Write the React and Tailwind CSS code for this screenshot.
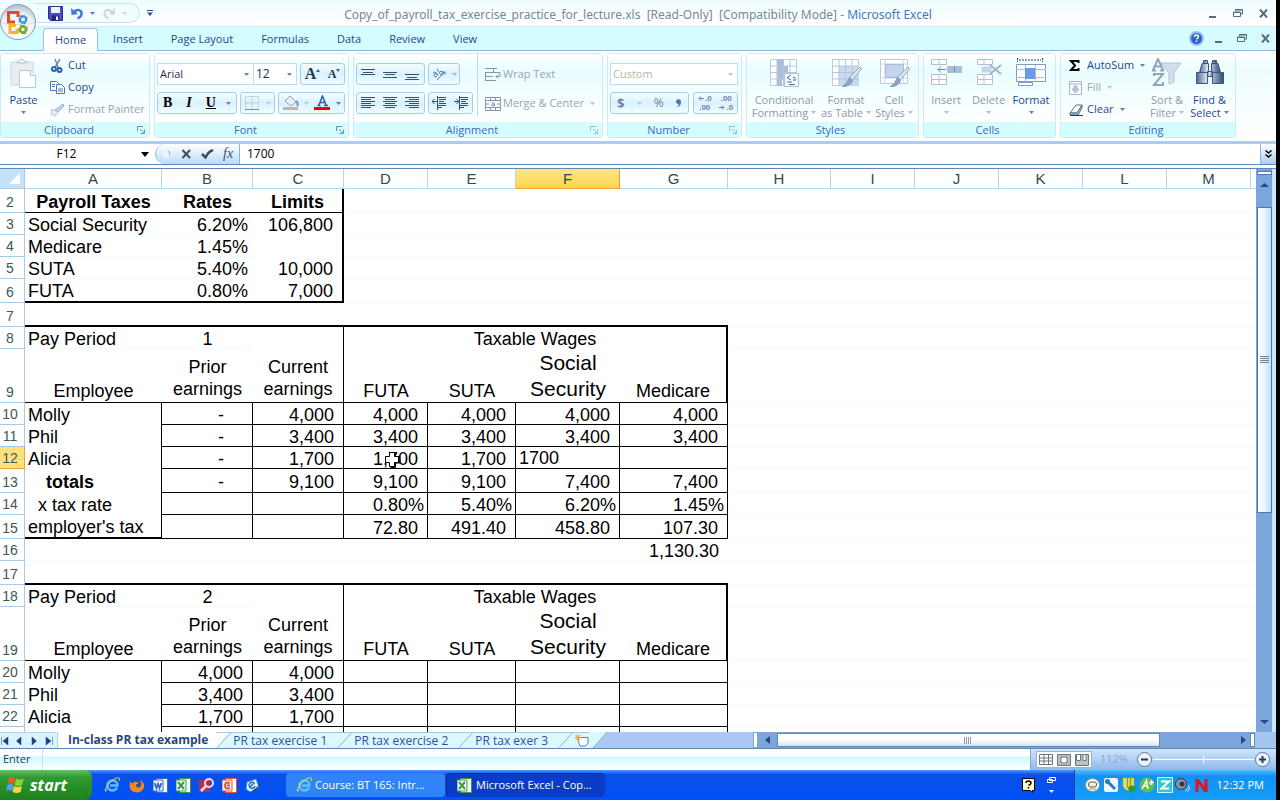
import { clsx } from "clsx";

const columns = [
    { key: "A", width: 137 },
    { key: "B", width: 91 },
    { key: "C", width: 91 },
    { key: "D", width: 84 },
    { key: "E", width: 88 },
    { key: "F", width: 104 },
    { key: "G", width: 108 },
    { key: "H", width: 103 },
    { key: "I", width: 84 },
    { key: "J", width: 84 },
    { key: "K", width: 84 },
    { key: "L", width: 84 },
    { key: "M", width: 84 },
];

// cell borders
const RB = "border-r border-r-black";
const RB2 = "border-r-2 border-r-black";
const BB = "border-b border-b-black";
const BB2 = "border-b-2 border-b-black";
const NONE = "";

// cell alignment
const left = "pl-[3px] text-left";
const center = "text-center";
const num = "pr-[9px] text-right";
const pct = "pr-[3px] text-right";
const rate = "pr-[5px] text-right";
const dash = "pr-[28px] text-right";

const money = (values, last = RB) =>
    values.map((t, i) => ({ t, a: t === "-" ? dash : num, b: [i === values.length - 1 ? last : RB, BB] }));

const periodRows = (first, period) => [
    {
        n: first,
        h: "h-[22px]",
        cells: [
            { t: "Pay Period", a: left },
            { t: period, a: center },
            { t: "", b: [RB] },
            { t: "Taxable Wages", a: center, span: 4, b: [RB2] },
        ],
    },
    {
        n: first + 1,
        h: "h-[54px]",
        tall: true,
        cells: [
            { t: "Employee", a: center, b: [BB] },
            { t: "Prior\nearnings", a: "text-center pb-[2px]", b: [BB] },
            { t: "Current\nearnings", a: "text-center pb-[2px]", b: [BB, RB] },
            { t: "FUTA", a: center, b: [BB] },
            { t: "SUTA", a: center, b: [BB] },
            { t: "Social\nSecurity", a: center, big: true, b: [BB] },
            { t: "Medicare", a: center, b: [BB, RB2] },
        ],
    },
];

const rows = [
    {
        n: 2,
        h: "h-[24px]",
        bold: true,
        cells: [
            { t: "Payroll Taxes", a: center, b: [BB] },
            { t: "Rates", a: center, b: [BB] },
            { t: "Limits", a: center, b: [BB, RB2] },
        ],
    },
    { n: 3, h: "h-[22px]", cells: [{ t: "Social Security", a: left }, { t: "6.20%", a: rate }, { t: "106,800", a: num, b: [RB2] }] },
    { n: 4, h: "h-[22px]", cells: [{ t: "Medicare", a: left }, { t: "1.45%", a: rate }, { t: "", b: [RB2] }] },
    { n: 5, h: "h-[22px]", cells: [{ t: "SUTA", a: left }, { t: "5.40%", a: rate }, { t: "10,000", a: num, b: [RB2] }] },
    {
        n: 6,
        h: "h-[24px]",
        cells: [
            { t: "FUTA", a: left, b: [BB2] },
            { t: "0.80%", a: rate, b: [BB2] },
            { t: "7,000", a: num, b: [BB2, RB2] },
        ],
    },
    { n: 7, h: "h-[24px]", cells: [{ t: "", span: 7, b: [BB2] }] },
    ...periodRows(8, "1"),
    { n: 10, h: "h-[22px]", cells: [{ t: "Molly", a: left, b: [RB] }, ...money(["-", "4,000", "4,000", "4,000", "4,000", "4,000"])] },
    { n: 11, h: "h-[22px]", cells: [{ t: "Phil", a: left, b: [RB] }, ...money(["-", "3,400", "3,400", "3,400", "3,400", "3,400"])] },
    {
        n: 12,
        h: "h-[22px]",
        active: true,
        cells: [
            { t: "Alicia", a: left, b: [RB] },
            ...money(["-", "1,700"]),
            { t: "1,700", a: num, b: [RB, BB], cursor: true },
            { t: "1,700", a: num, b: [RB, BB] },
            { t: "1700", a: left, b: [RB, BB], edit: true },
            { t: "", b: [RB, BB] },
        ],
    },
    {
        n: 13,
        h: "h-[24px]",
        cells: [
            { t: "totals", a: "pl-[21px] text-left font-bold", b: [RB] },
            ...money(["-", "9,100", "9,100", "9,100", "7,400", "7,400"]),
        ],
    },
    {
        n: 14,
        h: "h-[22px]",
        cells: [
            { t: "x tax rate", a: "pl-[13px] text-left", b: [RB] },
            { t: "", b: [RB, BB] },
            { t: "", b: [RB, BB] },
            ...["0.80%", "5.40%", "6.20%", "1.45%"].map(t => ({ t, a: pct, b: [RB, BB] })),
        ],
    },
    {
        n: 15,
        h: "h-[24px]",
        cells: [
            { t: "employer's tax", a: left, b: [RB, BB2] },
            ...money(["", "", "72.80", "491.40", "458.80", "107.30"]),
        ],
    },
    { n: 16, h: "h-[22px]", cells: [{ t: "", span: 6 }, { t: "1,130.30", a: num }] },
    { n: 17, h: "h-[24px]", cells: [{ t: "", span: 7, b: [BB2] }] },
    ...periodRows(18, "2"),
    { n: 20, h: "h-[22px]", cells: [{ t: "Molly", a: left, b: [RB] }, ...money(["4,000", "4,000", "", "", "", ""])] },
    { n: 21, h: "h-[22px]", cells: [{ t: "Phil", a: left, b: [RB] }, ...money(["3,400", "3,400", "", "", "", ""])] },
    { n: 22, h: "h-[22px]", cells: [{ t: "Alicia", a: left, b: [RB] }, ...money(["1,700", "1,700", "", "", "", ""])] },
    { n: "", h: "h-[24px]", cells: [{ t: "", b: [RB] }, ...money(["", "", "", "", "", ""])] },
];

function Arrow({ className = "text-[#5a83b8]" }) {
    return (
        <svg className={clsx("shrink-0", className)} width="5" height="3" viewBox="0 0 5 3" aria-hidden="true">
            <path d="M0 0h5L2.5 3z" fill="currentColor" />
        </svg>
    );
}

function OfficeButton() {
    return (
        <button type="button" aria-label="Office Button" className="absolute -left-px top-1 z-10">
            <svg width="38" height="38" viewBox="0 0 38 38">
                <defs>
                    <radialGradient id="orb" cx="50%" cy="75%" r="70%">
                        <stop offset="0" stopColor="#ffffff" />
                        <stop offset="0.7" stopColor="#eef4fa" />
                        <stop offset="1" stopColor="#b8c6d8" />
                    </radialGradient>
                </defs>
                <circle cx="19" cy="18" r="17.5" fill="url(#orb)" stroke="#8799b5" />
                <path d="M3 19c8 2 24 2 32 0" stroke="#d3dde9" fill="none" />
                <g fill="none" strokeWidth="3">
                    <path d="M16 18H9.500V8.500H19V13" stroke="#e8481c" />
                    <path d="M21 12.500h6v6h-6z" stroke="#3b8fdc" strokeWidth="2.500" strokeDasharray="5 1" />
                    <path d="M17 21.500h-6v7h7v-4" stroke="#f4b81c" />
                    <path d="M21 28.500v-6h6v6z" stroke="#6fae2c" strokeDasharray="5 1" />
                </g>
            </svg>
        </button>
    );
}

function WindowButtons({ className }) {
    return (
        <div className={clsx("flex items-center text-[#5a6b7c]", className)}>
            <button type="button" aria-label="Minimize">
                <svg width="9" height="9" viewBox="0 0 9 9"><path d="M1 8h7" stroke="currentColor" strokeWidth="2" /></svg>
            </button>
            <button type="button" aria-label="Restore">
                <svg width="10" height="9" viewBox="0 0 10 9" fill="none" stroke="currentColor">
                    <path d="M2.500 2V.5h7V5H8" />
                    <path d="M.5 3h7v4.500h-7z" />
                    <path d="M.5 3.500h7M2.500 1h7" />
                </svg>
            </button>
            <button type="button" aria-label="Close">
                <svg width="9" height="9" viewBox="0 0 9 9"><path d="M1 .5l7 8M8 .5l-7 8" stroke="currentColor" strokeWidth="2" /></svg>
            </button>
        </div>
    );
}

function TitleBar() {
    return (
        <header className="grid h-[26px] shrink-0 grid-cols-[1fr_auto_1fr] items-center bg-linear-to-b from-[#effdff] to-white">
            <div className="flex items-center gap-[7px] pl-9">
                <div className="flex h-5 items-center gap-1 rounded-r-full border border-l-0 border-[#c5e2f5] bg-[#f2fdff] pr-[12px] pl-[12px]">
                    <button type="button" aria-label="Save">
                        <svg width="15" height="15" viewBox="0 0 15 15">
                            <path d="M.5.500h14v14h-12l-2-2z" fill="#4a4fc0" stroke="#2b2f8a" />
                            <path d="M3 1h9v6H3z" fill="#eef3ff" />
                            <path d="M4 9.500h7V15H4z" fill="#23286e" />
                            <path d="M8 10.500h2V14H8z" fill="#fff" />
                        </svg>
                    </button>
                    <button type="button" aria-label="Undo" className="ml-[3px] flex items-center gap-[6px]">
                        <svg width="14" height="13" viewBox="0 0 14 13" fill="none">
                            <path d="M3 6c4-5 9-3 8.500 1 0 2-2 3.500-4 4.500" stroke="#3b78e0" strokeWidth="2.500" />
                            <path d="M1 1l.5 7L8 7z" fill="#3b78e0" />
                        </svg>
                        <Arrow />
                    </button>
                    <button type="button" aria-label="Redo" className="ml-[3px] flex items-center gap-[6px]">
                        <svg width="14" height="13" viewBox="0 0 14 13" fill="none">
                            <path d="M11 6C7 1 2 3 2.500 7c0 2 2 3.500 4 4.500" stroke="#c9d6e4" strokeWidth="2" />
                            <path d="M13 1l-.5 7L7 7z" fill="#c9d6e4" />
                        </svg>
                        <Arrow className="text-[#c3d3e3]" />
                    </button>
                </div>
                <button type="button" aria-label="Customize Quick Access Toolbar">
                    <svg width="6" height="6" viewBox="0 0 6 6" fill="#2c4f86"><path d="M0 0h6v1H0zM0 2.500h6L3 6z" /></svg>
                </button>
            </div>
            <h1 className="pt-[4px] font-['Noto_Sans',sans-serif] text-[12px] leading-4 whitespace-pre text-[#7a8796]">
                Copy_of_payroll_tax_exercise_practice_for_lecture.xls  [Read-Only]  [Compatibility Mode] -{" "}
                <span className="text-[#3f76c8]">Microsoft Excel</span>
            </h1>
            <WindowButtons className="justify-end gap-4 pr-[8px]" />
        </header>
    );
}

function RibbonTabs() {
    const tabs = ["Insert", "Page Layout", "Formulas", "Data", "Review", "View"];
    return (
        <nav className="flex h-[25px] shrink-0 items-end border-t border-b border-t-[#dcebf2] border-b-[#93b9e2] bg-[#d5fdff] pl-[43px] text-[11px] text-[#1c4790]">
            <button type="button" className="-mb-px mr-px h-[23px] rounded-t border border-b-0 border-[#9dc0e8] bg-white px-[11px] pt-px">
                Home
            </button>
            {tabs.map(tab => (
                <button key={tab} type="button" className="h-[22px] px-[14px] pt-px">
                    {tab}
                </button>
            ))}
            <div className="ml-auto flex items-center gap-[10px] self-center pr-[6px]">
                <button type="button" aria-label="Help">
                    <svg width="15" height="15" viewBox="0 0 15 15">
                        <circle cx="7.500" cy="7.500" r="6.500" fill="#2a62d4" stroke="#9cc0f0" strokeWidth="2" />
                        <path d="M5.500 6q0-2 2-2t2 1.800q0 1.200-2 2.200M7.500 9.500v1.500" stroke="#fff" strokeWidth="1.500" fill="none" />
                    </svg>
                </button>
                <WindowButtons className="gap-[14px]" />
            </div>
        </nav>
    );
}

function Group({ label, launcher, dim, className, children }) {
    return (
        <section className={clsx("flex h-[85px] flex-col overflow-hidden rounded-[3px] border border-[#cfe9f5]", className)}>
            <div className="flex h-[68px] bg-linear-to-b from-white via-[#e9fdff] via-25% to-white">{children}</div>
            <div className="flex flex-1 items-center bg-[#d5fdff] pr-1 text-[11px] leading-[15px] text-[#3b68bd]">
                <h2 className="flex-1 text-center">{label}</h2>
                {launcher && (
                    <button type="button" aria-label={`${label} options`} className={dim ? "text-[#a9bccd]" : "text-[#6d8fb5]"}>
                        <svg width="8" height="8" viewBox="0 0 8 8" fill="none" stroke="currentColor">
                            <path d="M.5 5V.5H6M3 3l4 4M7.500 3.500v4h-4" />
                        </svg>
                    </button>
                )}
            </div>
        </section>
    );
}

function SmallButton({ icon, label, disabled, arrow, className }) {
    return (
        <button
            type="button"
            disabled={disabled}
            className={clsx("flex h-[22px] items-center pt-px text-[11px] whitespace-nowrap", disabled ? "text-[#9aa5ab]" : "text-[#1c4790]", className)}
        >
            <span className="flex w-[18px] shrink-0 items-center">{icon}</span>
            {label}
            {arrow && <span className="ml-[6px]"><Arrow className={disabled ? "text-[#bcc6cc]" : "text-[#5a83b8]"} /></span>}
        </button>
    );
}

function BigButton({ icon, lines, disabled, className }) {
    return (
        <button
            type="button"
            disabled={disabled}
            className={clsx(
                "flex h-[68px] shrink-0 flex-col items-center pt-[4px] text-[11px] leading-[13px] whitespace-nowrap",
                disabled ? "text-[#8d9ba4]" : "text-[#1c4790]",
                className
            )}
        >
            <span className="flex h-[35px] items-start">{icon}</span>
            <span>{lines[0]}</span>
            <span className="flex h-[13px] items-center gap-[3px]">
                {lines[1]}
                <Arrow className={disabled ? "text-[#b5c1c9]" : "text-[#5a83b8]"} />
            </span>
        </button>
    );
}

function ButtonSet({ className, children }) {
    return (
        <div className={clsx("flex h-[22px] items-center justify-around rounded-[3px] border border-[#a8cdea] bg-linear-to-b from-[#f2feff] via-[#daf1ff] to-[#f0fdff]", className)}>
            {children}
        </div>
    );
}

function IconButton({ label, children, className }) {
    return (
        <button type="button" aria-label={label} className={clsx("flex items-center justify-center", className)}>
            {children}
        </button>
    );
}

function Lines({ rows: d }) {
    return (
        <svg width="15" height="14" viewBox="0 0 15 14"><path d={d} stroke="#36506e" fill="none" /></svg>
    );
}

function Clipboard() {
    return (
        <Group label="Clipboard" launcher className="w-[150px]">
            <BigButton
                className="w-[45px]"
                lines={["Paste", ""]}
                icon={
                    <svg width="27" height="30" viewBox="0 0 27 30">
                        <path d="M1 4h22v23H1z" fill="#e8edf3" stroke="#ccd6e0" />
                        <path d="M7 5q0-2 3-2 2-4 4 0 3 0 3 2z" fill="#f7f9fb" stroke="#b4c2d0" />
                        <path d="M9.500 12.500h11l5 5v12h-16z" fill="#fff" stroke="#b9c8d8" />
                        <path d="M20.500 12.500v5h5" fill="#eef3f8" stroke="#b9c8d8" />
                    </svg>
                }
            />
            <div className="flex flex-col pl-1">
                <SmallButton
                    label="Cut"
                    icon={
                        <svg width="14" height="15" viewBox="0 0 14 15" fill="none">
                            <path d="M5 1l3.500 9M10 1L5 9.500" stroke="#7389a8" strokeWidth="1.500" />
                            <circle cx="4" cy="11" r="2" stroke="#2e5fb0" strokeWidth="2" />
                            <circle cx="9.500" cy="12" r="2" stroke="#2e5fb0" strokeWidth="2" />
                        </svg>
                    }
                />
                <SmallButton
                    label="Copy"
                    icon={
                        <svg width="15" height="13" viewBox="0 0 15 13" fill="#fff" stroke="#4a76b8">
                            <path d="M.5.500h6l2 2v7h-8z" />
                            <path d="M6.500 3.500h5l3 3v6h-8z" />
                            <path d="M2 3.500h3M2 5.500h3M8 8h5M8 10h5" />
                        </svg>
                    }
                />
                <SmallButton
                    label="Format Painter"
                    disabled
                    icon={
                        <svg width="15" height="14" viewBox="0 0 15 14">
                            <path d="M13 1l1 2-6 6-3-2z" fill="#c3d6ea" stroke="#93aecb" />
                            <path d="M2 6l6 3-3 4-4-2z" fill="#e3eef8" stroke="#b1c6dc" />
                        </svg>
                    }
                />
            </div>
        </Group>
    );
}

function FontGroup() {
    return (
        <Group label="Font" launcher className="w-[195px]">
            <div className="flex w-full flex-col gap-[7px] px-[2px] pt-[9px]">
                <div className="flex gap-[3px]">
                    <div className="flex h-[22px] items-center border border-[#c0dcf0] bg-white pr-1">
                        <select aria-label="Font" className="w-[86px] appearance-none pl-[2px] text-[11px] text-[#1d2f4d]">
                            <option>Arial</option>
                        </select>
                        <Arrow />
                    </div>
                    <div className="-ml-[3px] flex h-[22px] w-[43px] items-center border border-l-0 border-[#c0dcf0] bg-white pr-1">
                        <select aria-label="Font size" className="w-[33px] appearance-none pl-[2px] text-[12px] text-[#1d2f4d]">
                            <option>12</option>
                        </select>
                        <Arrow />
                    </div>
                    <ButtonSet className="w-[45px] font-['Liberation_Serif',serif] font-bold text-[#21374f]">
                        <IconButton label="Grow font" className="text-[16px] leading-4">A<span className="mb-2"><svg width="4" height="3" viewBox="0 0 4 3"><path d="M0 3h4L2 0z" fill="#2e62b5" /></svg></span></IconButton>
                        <IconButton label="Shrink font" className="text-[12px] leading-4">A<span className="mb-2"><svg width="4" height="3" viewBox="0 0 4 3"><path d="M0 0h4L2 3z" fill="#2e62b5" /></svg></span></IconButton>
                    </ButtonSet>
                </div>
                <div className="flex gap-[3px]">
                    <ButtonSet className="w-[80px] font-['Liberation_Serif',serif] text-[14px] leading-4 font-bold text-black">
                        <IconButton label="Bold">B</IconButton>
                        <IconButton label="Italic" className="pl-1 italic">I</IconButton>
                        <IconButton label="Underline" className="pl-1 underline">U</IconButton>
                        <Arrow />
                    </ButtonSet>
                    <ButtonSet className="w-[35px]">
                        <IconButton label="Borders">
                            <svg width="14" height="14" viewBox="0 0 14 14" fill="none" stroke="#9fb3c8" strokeDasharray="1 1">
                                <path d="M.5.500h13v13H.5zM7 0v14M0 7h14" />
                                <path d="M0 13.500h14" stroke="#7b90aa" strokeDasharray="none" />
                            </svg>
                        </IconButton>
                        <Arrow className="text-[#b5c9dc]" />
                    </ButtonSet>
                    <ButtonSet className="w-[67px]">
                        <IconButton label="Fill color">
                            <svg width="17" height="16" viewBox="0 0 17 16">
                                <path d="M3 6l5-5 6 6-5 4z" fill="#e8eff6" stroke="#8ba3bd" />
                                <path d="M14 6q3 3 1 5" stroke="#6f93bd" strokeWidth="2" fill="none" />
                                <path d="M1 12h15v3H1z" fill="#bdb9a6" />
                            </svg>
                        </IconButton>
                        <Arrow className="text-[#b5c9dc]" />
                        <IconButton label="Font color">
                            <svg width="17" height="16" viewBox="0 0 17 16">
                                <path d="M3.500 10.500h3M10 10.500h4M5 10L8.500 1 12 10M6 7.500h5" stroke="#2f5ba8" strokeWidth="1.500" fill="none" />
                                <path d="M0 12h16v3H0z" fill="#e60012" />
                            </svg>
                        </IconButton>
                        <Arrow />
                    </ButtonSet>
                </div>
            </div>
        </Group>
    );
}

function Alignment() {
    return (
        <Group label="Alignment" launcher dim className="w-[250px]">
            <div className="mb-[6px] flex flex-col gap-[7px] border-r border-[#bcd9ee] pt-[9px] pr-[4px] pl-[2px]">
                <div className="flex gap-[3px]">
                    <ButtonSet className="w-[69px]">
                        <IconButton label="Top align"><Lines rows="M0 2.500h14M2 5.500h10M0 7.500h14" /></IconButton>
                        <IconButton label="Middle align"><Lines rows="M0 5.500h14M2 7.500h10M0 10.500h14" /></IconButton>
                        <IconButton label="Bottom align"><Lines rows="M0 7.500h14M2 10.500h10M0 12.500h14" /></IconButton>
                    </ButtonSet>
                    <ButtonSet className="w-[32px]">
                        <IconButton label="Orientation">
                            <svg width="15" height="14" viewBox="0 0 15 14" fill="none" stroke="#5b7ba4">
                                <path d="M1 6q2-2 3.500 0L6 8.500M5 7q-3-1-3 1.500T5.500 9M5 2l4 6q2 0 2-2T8 4.500" />
                                <path d="M5 13l8-8M10.500 5H13v2.500" />
                            </svg>
                        </IconButton>
                        <Arrow className="text-[#9fb9d3]" />
                    </ButtonSet>
                </div>
                <div className="flex gap-[3px]">
                    <ButtonSet className="w-[69px]">
                        <IconButton label="Align left"><Lines rows="M0 1.500h14M0 3.500h10M0 5.500h14M0 7.500h10M0 9.500h14M0 11.500h10" /></IconButton>
                        <IconButton label="Center"><Lines rows="M0 1.500h14M2 3.500h10M0 5.500h14M2 7.500h10M0 9.500h14M2 11.500h10" /></IconButton>
                        <IconButton label="Align right"><Lines rows="M0 1.500h14M4 3.500h10M0 5.500h14M4 7.500h10M0 9.500h14M4 11.500h10" /></IconButton>
                    </ButtonSet>
                    <ButtonSet className="w-[45px]">
                        <IconButton label="Decrease indent"><Lines rows="M5 1.500h9M7 3.500h7M7 5.500h5M7 7.500h7M5 9.500h9M5 11.500h5M0 5.500h5M2.500 3L0 5.500 2.500 8M5.500 0v14" /></IconButton>
                        <IconButton label="Increase indent"><Lines rows="M5 1.500h9M7 3.500h7M7 5.500h5M7 7.500h7M5 9.500h9M5 11.500h5M0 5.500h5M2.500 3L5 5.500 2.500 8M5.500 0v14" /></IconButton>
                    </ButtonSet>
                </div>
            </div>
            <div className="flex flex-col gap-[7px] pt-[9px] pl-[7px]">
                <SmallButton
                    label="Wrap Text"
                    disabled
                    icon={
                        <svg width="16" height="14" viewBox="0 0 16 14" fill="none" stroke="#8397ad">
                            <path d="M0 .5h12M0 4.500h15v4h-4M0 8.500h8M13 6.500l-2 2 2 2M0 12.500h11M.5 4v8M8.500 1v3" />
                        </svg>
                    }
                />
                <SmallButton
                    label="Merge & Center"
                    disabled
                    arrow
                    icon={
                        <svg width="16" height="14" viewBox="0 0 16 14" fill="#fff" stroke="#8397ad">
                            <path d="M.5.500h15v13H.5zM0 3.500h16M0 10.500h16M5.500 0v3M10.500 0v3M5.500 11v3M10.500 11v3" />
                            <path d="M1 7h3M12 7h3M6.500 6q3-1 3 1v2q-3 .5-3-1 .5-1 3-1" />
                        </svg>
                    }
                />
            </div>
        </Group>
    );
}

function NumberGroup() {
    return (
        <Group label="Number" launcher dim className="w-[135px]">
            <div className="flex flex-col gap-[7px] px-[2px] pt-[9px]">
                <div className="flex h-[22px] w-[128px] items-center border border-[#c0dcf0] bg-white pr-1">
                    <select aria-label="Number format" className="flex-1 appearance-none pl-[2px] text-[11px] text-[#b9b6a4]">
                        <option>Custom</option>
                    </select>
                    <Arrow className="text-[#b5c5d5]" />
                </div>
                <div className="flex gap-[4px] text-[#6d83a3]">
                    <ButtonSet className="w-[79px] font-bold">
                        <IconButton label="Accounting format" className="text-[13px] leading-4">$</IconButton>
                        <Arrow className="text-[#b5c9dc]" />
                        <IconButton label="Percent style" className="text-[12px] leading-4 font-normal">%</IconButton>
                        <IconButton label="Comma style">
                            <svg width="6" height="9" viewBox="0 0 6 9"><path d="M0 2.500a2.500 2.500 0 1 1 5 .5q0 4-4 5.500 2-2 1.500-3.500A2.500 2.500 0 0 1 0 2.500z" fill="#5674a0" /></svg>
                        </IconButton>
                    </ButtonSet>
                    <ButtonSet className="w-[45px] font-['Liberation_Sans',Arial,sans-serif] font-bold">
                        <IconButton label="Increase decimal" className="flex-col text-[8px] leading-[9px]">
                            <span className="flex items-center gap-px">
                                <svg width="6" height="5" viewBox="0 0 6 5" fill="none" stroke="currentColor"><path d="M6 2.500H1M3 .5l-2 2 2 2" /></svg>
                                .0
                            </span>
                            <span>.00</span>
                        </IconButton>
                        <IconButton label="Decrease decimal" className="flex-col text-[8px] leading-[9px]">
                            <span>.00</span>
                            <span className="flex items-center gap-px">
                                <svg width="6" height="5" viewBox="0 0 6 5" fill="none" stroke="currentColor"><path d="M0 2.500h5M3 .5l2 2-2 2" /></svg>
                                .0
                            </span>
                        </IconButton>
                    </ButtonSet>
                </div>
            </div>
        </Group>
    );
}

function GridIcon({ children, tint }) {
    return (
        <svg width="31" height="30" viewBox="0 0 31 30">
            <path d="M1.500 1.500h26v26h-26z" fill="#fff" stroke="#bccbdb" />
            {tint}
            <path d="M1 8h27M1 14.500h27M1 21h27M8 1v27M14.500 1v27M21 1v27" stroke="#b5c6d8" />
            {children}
        </svg>
    );
}

function Brush() {
    return (
        <>
            <path d="M29 9l1.500 2-9 11-3-2.500z" fill="#dce6f0" stroke="#94a9c0" />
            <path d="M18.500 19.500l3 3q-2 6-10 6 5-3 7-9z" fill="#8fa5c2" stroke="#7f96b4" />
        </>
    );
}

function StylesGroup() {
    return (
        <Group label="Styles" className="w-[173px]">
            <BigButton
                className="w-[74px]"
                disabled
                lines={["Conditional", "Formatting"]}
                icon={
                    <GridIcon tint={<path d="M8 1.500h6.500v6.500H8zM8 8h11v6.500H8zM8 14.500h7v6.500H8zM8 21h5v7H8z" fill="#a9bedb" />}>
                        <path d="M15.500 15.500h14v13h-14z" fill="#f8fbff" stroke="#b3c2d4" />
                        <path d="M22 17l-4 2.500 4 2.500M24 19l3 1.500M18 24h5M24 22h3M20 26.500h6" stroke="#54698a" fill="none" />
                    </GridIcon>
                }
            />
            <BigButton
                className="w-[50px]"
                disabled
                lines={["Format", "as Table"]}
                icon={<GridIcon tint={<path d="M8 8h20v20H8z" fill="#c9dbf0" />}><Brush /></GridIcon>}
            />
            <BigButton
                className="w-[46px]"
                disabled
                lines={["Cell", "Styles"]}
                icon={
                    <svg width="31" height="30" viewBox="0 0 31 30">
                        <path d="M1.500 1.500h27v24h-27z" fill="#fff" stroke="#bccbdb" />
                        <path d="M1 6h28M6 1v25M24 1v25M1 20h28" stroke="#c9d6e3" />
                        <path d="M6.500 6.500h18v13h-18z" fill="#c3d5ee" stroke="#a5bad6" />
                        <Brush />
                    </svg>
                }
            />
        </Group>
    );
}

function CellsGroup() {
    return (
        <Group label="Cells" className="w-[133px]">
            <BigButton
                className="w-[44px]"
                disabled
                lines={["Insert", ""]}
                icon={
                    <svg width="31" height="30" viewBox="0 0 31 30" fill="#fff" stroke="#b0c0d2">
                        <path d="M.5 1.500h15v5H.5zM8 1.500v5M.5 16.500h15v10H.5zM8 16v10M.5 21.500h15" />
                        <path d="M16.500 8.500h14v6h-14z" fill="#a9bedb" />
                        <path d="M7 11.500h8M10 8.500l-3 3 3 3M23.500 8v6" stroke="#7189ae" fill="none" />
                    </svg>
                }
            />
            <BigButton
                className="w-[41px]"
                disabled
                lines={["Delete", ""]}
                icon={
                    <svg width="26" height="30" viewBox="0 0 26 30" fill="#fff" stroke="#b0c0d2">
                        <path d="M1.500 1.500h15v5h-15zM8 1.500v5M1.500 16.500h15v10h-15zM8 16v10M1.500 21.500h15" />
                        <path d="M6 9h9v5H6z" fill="#c9d9ec" strokeDasharray="1 1" />
                        <path d="M14 7l11 9M25 7l-11 9" stroke="#a3b3ca" strokeWidth="2" />
                    </svg>
                }
            />
            <BigButton
                className="w-[44px]"
                lines={["Format", ""]}
                icon={
                    <svg width="32" height="30" viewBox="0 0 32 30" fill="#fff" stroke="#7f9cc0">
                        <path d="M2.500 0v4M27.500 0v4M4 2h22" stroke="#23436e" strokeDasharray="2 1" />
                        <path d="M1.500 6.500h29v17h-29z" />
                        <path d="M1 11.500h30M1 19.500h30M10.500 7v17M20.500 7v17" stroke="#a9bfd8" />
                        <path d="M10 10h10v11H10z" fill="#6a9be8" stroke="none" />
                        <path d="M3.500 24.500h14v3h-14z" />
                    </svg>
                }
            />
        </Group>
    );
}

function EditingGroup() {
    return (
        <Group label="Editing" className="w-[176px]">
            <div className="flex w-[85px] flex-col pl-2">
                <SmallButton
                    label="AutoSum"
                    arrow
                    icon={<svg width="11" height="11" viewBox="0 0 11 11"><path d="M9.500 3V1H2l4 4.500L2 10h7.500V8" fill="none" stroke="#000" strokeWidth="2" /></svg>}
                />
                <SmallButton
                    label="Fill"
                    arrow
                    disabled
                    icon={
                        <svg width="13" height="14" viewBox="0 0 13 14" fill="#fff" stroke="#a3b5c8">
                            <path d="M.5.500h12v13H.5zM0 3h13" />
                            <path d="M5 5h3v3h2l-3.500 4L3 8h2z" fill="#b8c7da" />
                        </svg>
                    }
                />
                <SmallButton
                    label="Clear"
                    arrow
                    icon={
                        <svg width="15" height="12" viewBox="0 0 15 12" fill="#fff" stroke="#5d7290">
                            <path d="M1 9l6-8h6l-5 8z" />
                            <path d="M8 9l5-8v3l-4 7H1V9z" fill="#aebfd6" />
                            <path d="M1 11.500h13" stroke="#2b3c56" />
                        </svg>
                    }
                />
            </div>
            <BigButton
                className="w-[42px]"
                disabled
                lines={["Sort &", "Filter"]}
                icon={
                    <svg width="30" height="30" viewBox="0 0 30 30" fill="none" stroke="#93a5bd">
                        <path d="M9 5h20l-7 10v9l-5 2V15z" fill="#d3deea" stroke="#b5c4d6" />
                        <path d="M1 12L6 1l5 11M3 8.500h6M0 12.500h4M8 12.500h4" strokeWidth="2" />
                        <path d="M2 18v-2h9L2 27h9v-3" strokeWidth="2" />
                    </svg>
                }
            />
            <BigButton
                className="w-[43px]"
                lines={["Find &", "Select"]}
                icon={
                    <svg width="30" height="28" viewBox="0 0 30 28">
                        <defs>
                            <linearGradient id="barrel" x1="0" x2="1">
                                <stop offset="0" stopColor="#4a6690" />
                                <stop offset="0.4" stopColor="#e3edf8" />
                                <stop offset="1" stopColor="#2d4a76" />
                            </linearGradient>
                        </defs>
                        <g fill="url(#barrel)" stroke="#3d5880">
                            <path d="M8.500 2.500h4v3h-4zM17.500 2.500h4v3h-4z" />
                            <path d="M7 5.500h6.500v9h-9zM16.500 5.500H23l2.500 9h-9z" />
                            <path d="M1.500 14.500h11v11h-11zM17.500 14.500h11v11h-11z" />
                            <path d="M12.500 13.500h5v5h-5z" />
                        </g>
                    </svg>
                }
            />
        </Group>
    );
}

function FormulaBar() {
    return (
        <div className="flex h-[25px] shrink-0 flex-col border-b border-[#5f88b5]">
            <div className="flex h-[21px] items-stretch border-b border-[#5f88b5] bg-white text-[12px]">
                <div className="flex w-[155px] items-center pr-[6px]">
                    <input aria-label="Name Box" defaultValue="F12" className="w-0 flex-1 pr-[8px] text-center text-black" />
                    <svg width="8" height="5" viewBox="0 0 8 5"><path d="M0 0h8L4 5z" fill="#000" /></svg>
                </div>
                <div className="flex w-[85px] items-center gap-[9px] rounded-l-full border-r border-l border-[#8fb4da] bg-linear-to-b from-white to-[#b8dcf8] pl-[5px]">
                    <svg width="11" height="10" viewBox="0 0 11 10"><circle cx="6" cy="5" r="4" fill="#eef4fa" /><path d="M6 1a4 4 0 0 1 2 7q1-4-2-7z" fill="#9fb2c6" /></svg>
                    <button type="button" aria-label="Cancel">
                        <svg width="11" height="10" viewBox="0 0 11 10"><path d="M1.500 1l7.500 8M9 1L1.500 9" stroke="#454c55" strokeWidth="2" /></svg>
                    </button>
                    <button type="button" aria-label="Enter">
                        <svg width="13" height="10" viewBox="0 0 13 10"><path d="M1 5l3.500 3.500Q7 3 12 1" stroke="#454c55" strokeWidth="2.500" fill="none" /></svg>
                    </button>
                    <button type="button" aria-label="Insert Function" className="font-['Liberation_Serif',serif] text-[14px] leading-4 text-[#454c55] italic">
                        fx
                    </button>
                </div>
                <input aria-label="Formula Bar" defaultValue="1700" className="min-w-0 flex-1 pl-[7px] text-black outline-none" />
                <button type="button" aria-label="Expand Formula Bar" className="flex w-4 items-center justify-center border-l border-[#8fb4da] bg-linear-to-b from-white to-[#a9cdf0]">
                    <svg width="7" height="8" viewBox="0 0 7 8" fill="none" stroke="#000" strokeWidth="1.500"><path d="M.5.500l3 2.500 3-2.500M.5 4.500l3 2.500 3-2.500" /></svg>
                </button>
            </div>
        </div>
    );
}

function Cell({ cell, bold, tall }) {
    const [first = NONE, second = NONE] = cell.b || [];
    return (
        <td
            colSpan={cell.span}
            className={clsx(
                "p-0 whitespace-pre",
                tall ? "align-bottom" : "pt-[2px] align-middle leading-[18px]",
                tall && (cell.big ? "text-[21px] leading-[26px]" : "leading-[22px]"),
                bold && "font-bold",
                !cell.b && "border-b border-b-[#f1fbff]",
                cell.cursor && "relative",
                cell.a,
                first,
                second
            )}
        >
            {cell.edit ? (
                <input aria-label="F12" defaultValue={cell.t} className="block h-[18px] w-full bg-white outline-none" />
            ) : (
                cell.t
            )}
            {cell.cursor && (
                <svg className="absolute top-[4px] left-[40px]" width="17" height="18" viewBox="0 0 17 18">
                    <path d="M5.500 1.500h5v4h4v6h-4v4h-5v-4h-4v-6h4z" fill="#fff" stroke="#000" />
                    <path d="M11 2.500v3h5v6.500h-4.500v4.500H6.500" stroke="#000" fill="none" />
                </svg>
            )}
        </td>
    );
}

function Sheet() {
    return (
        <div className="min-w-0 flex-1 overflow-hidden bg-white">
            <table className="w-full table-fixed border-separate border-spacing-0 font-['Liberation_Sans',Arial,sans-serif] text-[18px] text-black">
                <colgroup>
                    <col style={{ width: 25 }} />
                    {columns.map(c => (
                        <col key={c.key} style={{ width: c.width }} />
                    ))}
                    <col />
                </colgroup>
                <thead>
                    <tr className="h-[20px] text-[15px] leading-[18px] text-[#34494f]">
                        <th className="border-r border-b border-[#a5cbe8] bg-[#c3e1f8] p-0">
                            <svg className="ml-auto mr-[4px]" width="11" height="11" viewBox="0 0 11 11"><path d="M11 0v11H0z" fill="#fff" /></svg>
                        </th>
                        {columns.map(c => (
                            <th
                                key={c.key}
                                scope="col"
                                className={clsx(
                                    "border-r border-b p-0 font-normal",
                                    c.key === "F"
                                        ? "border-[#f0a030] bg-linear-to-b from-[#fbe48a] to-[#ffd648]"
                                        : "border-[#b3d6ee] bg-white"
                                )}
                            >
                                {c.key}
                            </th>
                        ))}
                        <th className="border-b border-[#b3d6ee] p-0" />
                    </tr>
                </thead>
                <tbody>
                    {rows.map((row, r) => {
                        const used = row.cells.reduce((sum, c) => sum + (c.span || 1), 0);
                        return (
                            <tr key={r} className={row.h}>
                                <th
                                    scope="row"
                                    className={clsx(
                                        "border-r border-b p-0 pr-[4px] align-bottom text-[14px] leading-[19px] font-normal text-[#3c565c]",
                                        row.active ? "border-[#f0a030] bg-[#fde27c]" : "border-[#a5cbe8] bg-white"
                                    )}
                                >
                                    {row.n}
                                </th>
                                {row.cells.map((cell, i) => (
                                    <Cell key={i} cell={cell} bold={row.bold} tall={row.tall} />
                                ))}
                                <td colSpan={14 - used} className="border-b border-[#f1fbff] p-0" />
                            </tr>
                        );
                    })}
                </tbody>
            </table>
        </div>
    );
}

function VerticalScroll() {
    return (
        <div className="flex w-5 shrink-0 border-r-4 border-[#c5e8fb] bg-[#7ba5db] pl-px">
            <div className="flex flex-1 flex-col items-center">
                <div className="mt-[2px] flex h-[4px] w-full items-center justify-center border border-[#4d79b3] bg-white" />
                <button type="button" aria-label="Scroll up" className="flex h-[32px] items-start pt-[8px]">
                    <svg width="9" height="4" viewBox="0 0 9 4"><path d="M0 4h9L4.500 0z" fill="#26497e" /></svg>
                </button>
                <div className="flex w-full flex-[305] items-center justify-center border border-[#4d79b3] bg-linear-to-r from-white via-[#e6f7ff] to-[#bfe0fb]">
                    <svg width="9" height="8" viewBox="0 0 9 8"><path d="M0 .5h9M0 2.500h9M0 4.500h9M0 6.500h9" stroke="#6d7f96" /></svg>
                </div>
                <div className="flex-[208]" />
                <button type="button" aria-label="Scroll down" className="flex h-[12px] items-start">
                    <svg width="9" height="4" viewBox="0 0 9 4"><path d="M0 0h9L4.500 4z" fill="#26497e" /></svg>
                </button>
            </div>
        </div>
    );
}

function Slant() {
    return (
        <svg className="shrink-0" width="16" height="15" viewBox="0 0 16 15" aria-hidden="true">
            <path d="M0 15L14 0h2v15z" fill="#dcf8ff" />
            <path d="M1 14.500L14.500 0" stroke="#8fadd4" fill="none" />
        </svg>
    );
}

function SheetTabs() {
    const others = ["PR tax exercise 1", "PR tax exercise 2", "PR tax exer 3"];
    const nav = [
        ["First sheet", "M1.500 0v8M8 0v8L3 4z"],
        ["Previous sheet", "M6 0v8L1.500 4z"],
        ["Next sheet", "M2 0v8l4.500-4z"],
        ["Last sheet", "M7.500 0v8M1 0v8l5-4z"],
    ];
    return (
        <div className="flex h-[17px] shrink-0 items-stretch border-b border-[#5f88b5] bg-[#a9c8f3] text-[12px] leading-[16px] text-[#2d5295]">
            <div className="flex w-[58px] items-center gap-[6px] border-t border-r border-[#b9d3ee] bg-[#d8f4ff]">
                {nav.map(([label, d]) => (
                    <button key={label} type="button" aria-label={label}>
                        <svg width="9" height="8" viewBox="0 0 9 8"><path d={d} fill="#1c3f86" stroke="#1c3f86" strokeWidth=".5" /></svg>
                    </button>
                ))}
            </div>
            <button type="button" className="bg-white pr-2 pl-[10px] font-bold text-[#27477c]">In-class PR tax example</button>
            {others.map((name, i) => (
                <div key={name} className={clsx("flex border-t border-[#a9c5e6]", i ? "bg-[#dcf8ff]" : "bg-white")}>
                    <Slant />
                    <button type="button" className="bg-[#dcf8ff] pr-[10px] pl-px">{name}</button>
                </div>
            ))}
            <div className="flex items-center border-t border-[#a9c5e6] bg-[#dcf8ff]">
                <Slant />
                <button type="button" aria-label="Insert Worksheet">
                    <svg width="15" height="13" viewBox="0 0 15 13">
                        <path d="M4 3.500h10v6l-3 2.500H6q-2-4-2-8.500z" fill="#fff" stroke="#5d7db2" />
                        <path d="M4 0v7M.5 3.500h7M1.500 1l5 5M6.500 1l-5 5" stroke="#f0a020" />
                    </svg>
                </button>
            </div>
            <svg width="18" height="16" viewBox="0 0 18 16" className="shrink-0"><path d="M0 0h18L4 16H0z" fill="#dcf8ff" /><path d="M18 0L4 16" stroke="#8fadd4" /></svg>
            <div className="ml-auto flex w-[41%] items-stretch bg-[#7ba5db]">
                <div className="w-[5px] border border-[#7ba5db] bg-white" />
                <button type="button" aria-label="Scroll left" className="flex w-[19px] items-center justify-center">
                    <svg width="5" height="8" viewBox="0 0 5 8"><path d="M5 0v8L0 4z" fill="#26497e" /></svg>
                </button>
                <div className="my-px flex flex-[386] items-center justify-center border border-[#5f88b5] bg-linear-to-b from-white from-50% to-[#cfe2f6]">
                    <svg width="8" height="7" viewBox="0 0 8 7"><path d="M.5 0v7M2.500 0v7M4.500 0v7M6.500 0v7" stroke="#8e9db0" /></svg>
                </div>
                <button type="button" aria-label="Scroll right" className="flex flex-[87] items-center justify-end pr-1">
                    <svg width="5" height="8" viewBox="0 0 5 8"><path d="M0 0v8l5-4z" fill="#26497e" /></svg>
                </button>
                <div className="my-px w-[5px] border border-[#5f88b5] bg-white" />
                <div className="w-[21px] bg-[#a3c6f0]" />
            </div>
        </div>
    );
}

function StatusBar() {
    return (
        <footer className="flex h-[21px] shrink-0 items-stretch bg-linear-to-b from-white from-30% via-[#d3f8ff] via-40% to-white text-[11px] text-[#20396b]">
            <span className="flex w-[43px] items-center border-r border-[#c9dfec] pl-[3px]">Enter</span>
            <div className="ml-auto flex items-center border-l border-[#7fa8d8] bg-linear-to-b from-[#cfe6fd] to-[#8fb9ea] pl-[5px]">
                <div className="flex h-[17px] w-[56px] items-center justify-around border border-[#9ab4cf] bg-white">
                    <button type="button" aria-label="Normal view">
                        <svg width="14" height="11" viewBox="0 0 14 11" fill="none" stroke="#6b7683"><path d="M.5.500h13v10H.5zM0 4h14M0 7h14M5 0v11M9.500 0v11" /></svg>
                    </button>
                    <button type="button" aria-label="Page layout view">
                        <svg width="14" height="12" viewBox="0 0 14 12" fill="#fff" stroke="#6b7683"><path d="M.5.500h13v11H.5z" fill="#b9c0c8" /><path d="M4 3h6v6H4z" /></svg>
                    </button>
                    <button type="button" aria-label="Page break preview">
                        <svg width="14" height="12" viewBox="0 0 14 12" fill="#fff" stroke="#6b7683"><path d="M.5.500h13v11H.5z" fill="#b9c0c8" /><path d="M1.500.500h4v6h-4zM8 .5h3v6H8z" /></svg>
                    </button>
                </div>
                <span className="w-[44px] pl-2 text-[#8fa9c8]">112%</span>
                <button type="button" aria-label="Zoom out">
                    <svg width="17" height="17" viewBox="0 0 17 17" fill="none"><circle cx="8.500" cy="8.500" r="7" fill="#eaf4fd" stroke="#5d7896" /><path d="M5 8.500h7" stroke="#243b5c" strokeWidth="2" /></svg>
                </button>
                <input type="range" aria-label="Zoom" disabled className="h-px w-[101px] appearance-none bg-white [&::-webkit-slider-thumb]:h-[7px] [&::-webkit-slider-thumb]:w-px [&::-webkit-slider-thumb]:appearance-none [&::-webkit-slider-thumb]:bg-white" />
                <button type="button" aria-label="Zoom in" className="mr-[5px]">
                    <svg width="17" height="17" viewBox="0 0 17 17" fill="none"><circle cx="8.500" cy="8.500" r="7" fill="#eaf4fd" stroke="#5d7896" /><path d="M5 8.500h7M8.500 5v7" stroke="#243b5c" strokeWidth="2" /></svg>
                </button>
            </div>
        </footer>
    );
}

function IeIcon() {
    return (
        <svg width="17" height="16" viewBox="0 0 17 16" fill="none">
            <path d="M13 10.500q-1.500 3-4.500 3A5 5 0 1 1 13.500 8.500H6" stroke="#5cc0fa" strokeWidth="2.500" />
            <path d="M3 13q-3 3-1-2Q6 3 13 1q4-1 2 3" stroke="#f6d34a" />
        </svg>
    );
}

function OfficeIcon({ color, d }) {
    return (
        <svg width="15" height="15" viewBox="0 0 15 15" fill="none">
            <path d="M3.500.500h11v14h-11z" fill="#fff" stroke={color} />
            <path d="M0 2h10v11H0z" fill="#eef6ff" stroke={color} />
            <path d={d} stroke={color} strokeWidth="2" />
        </svg>
    );
}

const excelMark = "M2 4l6 7M8 4l-6 7";

function Taskbar() {
    return (
        <div className="flex h-[30px] shrink-0 items-stretch bg-linear-to-b from-[#4a9bff] via-[#0a4fe8] via-15% to-[#0050f8] text-[11px] text-white">
            <button type="button" className="flex w-[92px] items-center gap-[5px] rounded-r-lg bg-linear-to-b from-[#5fc45f] via-[#2f9a2f] via-25% to-[#1f801f] pl-[6px] text-[16px] leading-5 font-bold italic">
                <svg width="19" height="18" viewBox="0 0 19 18">
                    <path d="M3 2q3-2 6 0L7.500 8q-3-2-6 0z" fill="#f0582a" />
                    <path d="M10 2.500q4 2 8 0L16 9q-4 2-7.500 0z" fill="#8cd03c" />
                    <path d="M1.500 9q3-2 6 0L6 15q-3-2-6 0z" fill="#5a9cf8" />
                    <path d="M8 10q4 2 8 0l-1.500 6q-4 2-8 0z" fill="#fcd43c" />
                </svg>
                start
            </button>
            <div className="flex w-[194px] items-center gap-2 pl-[12px]">
                <button type="button" aria-label="Internet Explorer"><IeIcon /></button>
                <button type="button" aria-label="Firefox">
                    <svg width="16" height="16" viewBox="0 0 16 16"><circle cx="8" cy="8" r="6" fill="#2b4fa8" /><path d="M1 4q1 3 3 2 3-3 6 1-3-1-3 2 2 3 5 0 1-3-1-6 5 3 4 7-1 5-7 5.500Q1 15 .5 9z" fill="#f5871f" /></svg>
                </button>
                <button type="button" aria-label="Word"><OfficeIcon color="#3a6bc8" d="M1.500 5l2 5 1.500-4 1.500 4 2-5" /></button>
                <button type="button" aria-label="Excel"><OfficeIcon color="#3c9a3c" d={excelMark} /></button>
                <button type="button" aria-label="Access">
                    <svg width="15" height="15" viewBox="0 0 15 15"><path d="M0 2h11v12H0z" fill="#b03050" /><circle cx="10" cy="5" r="4" fill="none" stroke="#f7d8e0" strokeWidth="2" /><path d="M7 8l-5 5" stroke="#f7d8e0" strokeWidth="2.500" /></svg>
                </button>
                <button type="button" aria-label="PowerPoint"><OfficeIcon color="#e0552c" d="M8 5Q3 3 3 7.500T8 10M5 7.500h3" /></button>
                <button type="button" aria-label="Outlook Express">
                    <svg width="15" height="15" viewBox="0 0 15 15" fill="none"><path d="M2 4l9-3 3 8-9 5-4-3z" fill="#e6f4ff" stroke="#2f8ae0" /><path d="M10 8a3 3 0 1 1-1-3L5 9" stroke="#2070d0" strokeWidth="1.500" /><path d="M9 13l6-7" stroke="#2b2b2b" /></svg>
                </button>
            </div>
            <button type="button" className="my-[3px] flex w-[159px] items-center gap-[2px] rounded-sm bg-[#2f84f8] pl-[10px]">
                <IeIcon />
                Course: BT 165: Intr...
            </button>
            <button type="button" className="my-[3px] ml-px flex w-[159px] items-center gap-[4px] rounded-sm border-t border-l border-[#062a8a] bg-[#0a3cc8] pl-[10px]">
                <OfficeIcon color="#3c9a3c" d={excelMark} />
                Microsoft Excel - Cop...
            </button>
            <div className="ml-auto flex items-center gap-[12px] pr-[18px]">
                <button type="button" aria-label="Help">
                    <svg width="13" height="15" viewBox="0 0 13 15"><path d="M.5.500h12v12h-2v2l-2-2h-8z" fill="#fffbd0" stroke="#000" /><path d="M4 5q0-2 2.500-2T9 5q0 1-2.500 2.500M6.500 9v1.500" stroke="#000" strokeWidth="1.500" fill="none" /></svg>
                </button>
                <button type="button" aria-label="Language bar options">
                    <svg width="9" height="17" viewBox="0 0 9 17" fill="none"><path d="M2.500.500h6v3h-6zM.5 2.500h5v3h-5z" fill="#0a4fe8" stroke="#fff" /><path d="M2 13h5l-2.500 3z" fill="#fff" /></svg>
                </button>
            </div>
            <div className="flex items-center gap-[2px] border-l border-[#0a3fb0] bg-linear-to-b from-[#4cc0ff] via-[#1292f4] via-20% to-[#149cf8] pr-[12px] pl-[9px]">
                <svg width="17" height="16" viewBox="0 0 17 16"><ellipse cx="8.500" cy="8" rx="7" ry="6.500" fill="#fff" stroke="#8d9078" /><rect x="4.500" y="5" width="8" height="5" rx="2" fill="#f4f0d8" stroke="#555" /><path d="M5 12h7" stroke="#b08a4c" /></svg>
                <svg width="16" height="16" viewBox="0 0 16 16"><rect x="1" y="1" width="14" height="14" rx="2" fill="#eef8ff" /><path d="M4 4l8 8" stroke="#2878c8" strokeWidth="3" /><circle cx="4.500" cy="4.500" r="2.500" fill="#2878c8" /></svg>
                <svg width="16" height="16" viewBox="0 0 16 16"><path d="M2 1h4v9l3 4q-6-1-7-5zM7 1h2v9H7zM10 1h3v9h-3z" fill="#f2dc4c" stroke="#c8a820" strokeWidth=".5" /><circle cx="11" cy="12" r="3.500" fill="#2f9a2f" /></svg>
                <svg width="16" height="16" viewBox="0 0 16 16"><circle cx="8" cy="8" r="7.500" fill="#5cc04a" /><path d="M3 12L7.500 3.500 9 12M5 9h4M10 5.500h5M12.500 3v5" stroke="#fff" strokeWidth="1.500" fill="none" /></svg>
                <svg width="16" height="16" viewBox="0 0 16 16"><path d="M.5.500h15v15H.5z" fill="#3cc0d8" stroke="#d8f4f8" /><path d="M4 4.500h8l-7.500 7H12" stroke="#fff" strokeWidth="2" fill="none" /></svg>
                <svg width="16" height="16" viewBox="0 0 16 16"><circle cx="6" cy="7" r="5.500" fill="#8b95a0" stroke="#303840" /><circle cx="7" cy="7" r="2.500" fill="#303840" /><path d="M10 14q4-2 4-6M12 15q3-2 3-5" stroke="#d0d8e0" fill="none" /></svg>
                <svg className="ml-px" width="15" height="15" viewBox="0 0 15 15"><path d="M1.500 14V1h3l6 8V1h3v13h-3l-6-8v8z" fill="#e8101c" /></svg>
                <time className="ml-[6px]">12:32 PM</time>
            </div>
        </div>
    );
}

export default function App() {
    return (
        <div className="relative flex h-screen flex-col overflow-hidden border-r-4 border-black bg-white font-['Open_Sans','Noto_Sans',sans-serif]">
            <OfficeButton />
            <TitleBar />
            <RibbonTabs />
            <div className="flex h-[93px] shrink-0 items-start gap-[4px] overflow-hidden border-b-[3px] border-[#a9ccf0] bg-linear-to-b from-white via-[#effdff] via-20% to-white pt-[2px]">
                <Clipboard />
                <FontGroup />
                <Alignment />
                <NumberGroup />
                <StylesGroup />
                <CellsGroup />
                <EditingGroup />
            </div>
            <FormulaBar />
            <main className="flex min-h-0 flex-1">
                <Sheet />
                <VerticalScroll />
            </main>
            <SheetTabs />
            <StatusBar />
            <Taskbar />
        </div>
    );
}
